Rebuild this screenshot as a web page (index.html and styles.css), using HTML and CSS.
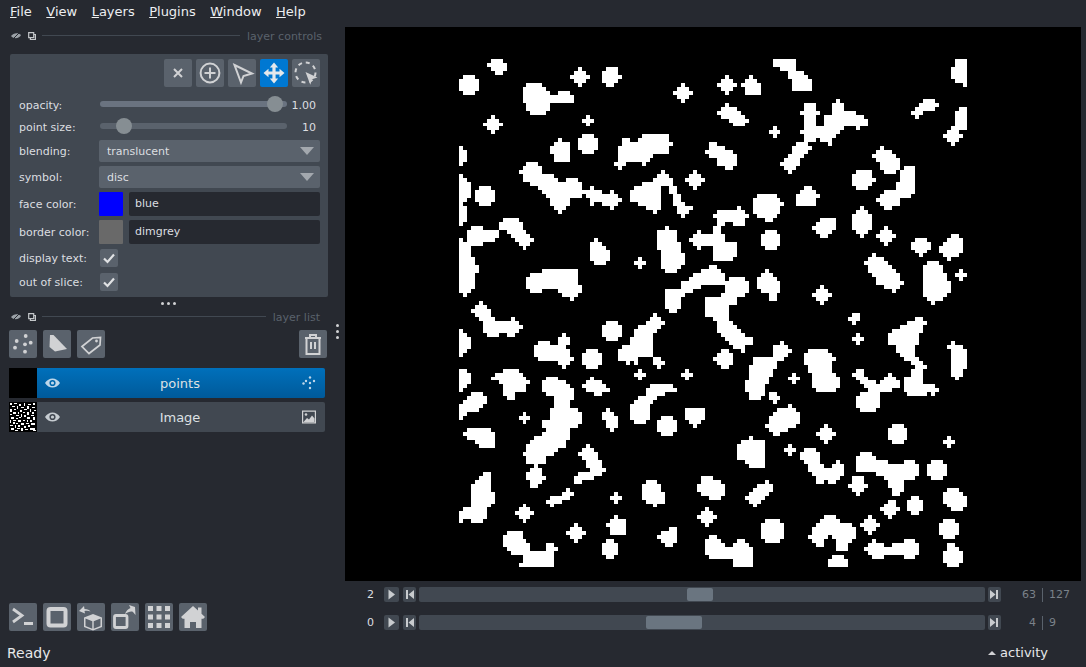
FILE: index.html
```html
<!DOCTYPE html>
<html lang="en">
<head>
<meta charset="utf-8">
<title>napari</title>
<link rel="stylesheet" href="styles.css">
</head>
<body>
<div class="app">
  <nav class="menu">
    <span><u>F</u>ile</span><span><u>V</u>iew</span><span><u>L</u>ayers</span><span><u>P</u>lugins</span><span><u>W</u>indow</span><span><u>H</u>elp</span>
  </nav>
  <div class="main">
    <aside class="left">
      <div class="dock-title first">
        <svg class="dock-ico" viewBox="0 0 10 8"><path d="M0 4c2-3 7-4 10-1-1 3-7 5-10 1z"/><path class="cut" d="M2 7L8 1"/></svg>
        <svg class="dock-ico small" viewBox="0 0 8 8"><path class="frame" d="M.7.7h5v5h-5zM6 2.5h1.4v5h-5V6"/></svg>
        <i class="rule"></i><span>layer controls</span>
      </div>
      <section class="controls">
        <div class="modes">
          <button class="btn"><svg viewBox="0 0 28 28"><path class="st" d="M10 10l8 8M18 10l-8 8"/></svg></button>
          <button class="btn"><svg viewBox="0 0 28 28"><circle class="st" cx="14" cy="14" r="9.400"/><path class="st" d="M14 8.500v11M8.500 14h11"/></svg></button>
          <button class="btn"><svg viewBox="0 0 28 28"><path class="st" d="M6.500 6L24 14.500 15.500 17 13 23.500z"/></svg></button>
          <button class="btn on"><svg viewBox="0 0 28 28"><path class="fl" d="M14 3.500l4.200 5h-2.600v3.900h3.900V9.800l5 4.200-5 4.200v-2.600h-3.900v3.900h2.600l-4.200 5-4.200-5h2.600v-3.900H8.500v2.600l-5-4.200 5-4.200v2.600h3.900V8.500H9.800z"/></svg></button>
          <button class="btn"><svg viewBox="0 0 28 28"><circle class="st dash" cx="13.500" cy="13.500" r="10"/><path class="fl" d="M13.500 13l12 5.500-5.500 1.700-1.700 5.500z"/></svg></button>
        </div>
        <div class="row r-slider"><label>opacity:</label><div class="track"><b class="fill-a"></b></div><em>1.00</em></div>
        <div class="row r-slider two"><label>point size:</label><div class="track"><b class="fill-b"></b></div><em>10</em></div>
        <div class="row r-combo first-combo"><label>blending:</label><div class="combo"><span>translucent</span><i></i></div></div>
        <div class="row r-combo"><label>symbol:</label><div class="combo"><span>disc</span><i></i></div></div>
        <div class="row r-color"><label>face color:</label><div class="swatch blue"></div><div class="field">blue</div></div>
        <div class="row r-color"><label>border color:</label><div class="swatch grey"></div><div class="field">dimgrey</div></div>
        <div class="row r-check"><label>display text:</label><div class="check"><svg viewBox="0 0 18 18"><path d="M4 9.500l3.500 3.500L14 5.500"/></svg></div></div>
        <div class="row r-check"><label>out of slice:</label><div class="check"><svg viewBox="0 0 18 18"><path d="M4 9.500l3.500 3.500L14 5.500"/></svg></div></div>
      </section>
      <div class="grip"><i></i><i></i><i></i></div>
      <div class="dock-title second">
        <svg class="dock-ico" viewBox="0 0 10 8"><path d="M0 4c2-3 7-4 10-1-1 3-7 5-10 1z"/><path class="cut" d="M2 7L8 1"/></svg>
        <svg class="dock-ico small" viewBox="0 0 8 8"><path class="frame" d="M.7.7h5v5h-5zM6 2.500h1.400v5h-5V6"/></svg>
        <i class="rule"></i><span>layer list</span>
      </div>
      <div class="vgrip"><i></i><i></i><i></i></div>
      <div class="layer-tools">
        <button class="btn"><svg viewBox="0 0 28 28"><g class="fl"><circle cx="16.700" cy="6" r="1.900"/><circle cx="7.700" cy="11" r="1.900"/><circle cx="21.700" cy="12.700" r="1.900"/><circle cx="16" cy="14.300" r="1.900"/><circle cx="6" cy="17.700" r="1.900"/><circle cx="16" cy="21.700" r="1.900"/></g></svg></button>
        <button class="btn"><svg viewBox="0 0 28 28"><path class="fl" d="M7 5h3.500L24 19l-12 2.500L6.500 17z"/></svg></button>
        <button class="btn"><svg viewBox="0 0 28 28"><path class="st thin" d="M5 16.500L15.500 8l8-.5-.5 7.500L12 23.500z"/><circle class="fl" cx="19.500" cy="11" r="1.400"/></svg></button>
        <button class="btn trash"><svg viewBox="0 0 28 28"><path class="st" d="M6 8h16M11 7.500V5h6v2.500M7.500 8.500V24h13V8.500M12 12v7M16 12v7"/></svg></button>
      </div>
      <ul class="layers">
        <li class="layer sel">
          <div class="thumb"></div>
          <div class="body">
            <svg class="eye" viewBox="0 0 16 12"><path d="M0 6c4-6.500 12-6.500 16 0-4 6.500-12 6.500-16 0z"/><circle cx="8" cy="6" r="3.300"/><circle class="pupil" cx="8" cy="6" r="1.700"/></svg>
            <span>points</span>
            <svg class="type" viewBox="0 0 14 14"><g><circle cx="1.500" cy="7.500" r="1.200"/><circle cx="4" cy="5" r="1.200"/><circle cx="8" cy="1.500" r="1.200"/><circle cx="12" cy="5" r="1.200"/><circle cx="8" cy="7" r="1.200"/><circle cx="8" cy="12" r="1.200"/></g></svg>
          </div>
        </li>
        <li class="layer">
          <div class="thumb noise"><svg viewBox="0 0 28 30"><path d="M1 1h2v2H1zM5 1h3v1H5zM10 2h2v2h-2zM15 1h1v3h-1zM19 2h3v1h-3zM24 1h2v2h-2zM3 4h3v1H3zM8 4h1v3H8zM12 5h3v1h-3zM18 4h2v3h-2zM23 5h3v1h-3zM1 7h2v3H1zM5 7h2v1H5zM11 8h2v2h-2zM15 7h3v1h-3zM21 7h1v3h-1zM25 8h2v1h-2zM4 10h3v2H4zM9 10h1v2H9zM14 10h2v1h-2zM18 10h2v3h-2zM23 10h2v2h-2zM1 12h2v1H1zM7 13h3v1H7zM12 12h1v3h-1zM15 13h2v2h-2zM22 13h3v1h-3zM2 15h3v2H2zM7 16h2v1H7zM10 15h2v1h-2zM18 15h3v2h-3zM24 15h2v3h-2zM1 18h1v3H1zM4 18h3v1H4zM9 18h3v2H9zM14 18h2v1h-2zM18 18h1v2h-1zM21 18h2v2h-2zM4 20h2v2H4zM7 21h2v1H7zM12 21h3v2h-3zM17 21h3v1h-3zM22 21h4v2h-4zM1 23h3v1H1zM6 23h1v3H6zM9 23h2v2H9zM15 24h2v2h-2zM19 23h2v2h-2zM2 26h3v2H2zM8 26h3v1H8zM12 26h2v3h-2zM16 27h3v1h-3zM21 26h5v2h-5zM6 28h3v1H6zM24 28h3v1h-3z"/></svg></div>
          <div class="body">
            <svg class="eye" viewBox="0 0 16 12"><path d="M0 6c4-6.500 12-6.500 16 0-4 6.500-12 6.500-16 0z"/><circle cx="8" cy="6" r="3.300"/><circle class="pupil" cx="8" cy="6" r="1.700"/></svg>
            <span>Image</span>
            <svg class="type img" viewBox="0 0 14 14"><path class="framed" d="M.6 1.100h12.800v11.800H.6z"/><circle cx="4" cy="4.500" r="1.300"/><path d="M1.500 12l3.500-4 2 1.500 3-4 2.500 3V12z"/></svg>
          </div>
        </li>
      </ul>
      <div class="view-tools">
        <button class="btn"><svg viewBox="0 0 28 28"><path class="st wide" d="M4 6l9 6.500L4 19M15 20.500h9"/></svg></button>
        <button class="btn"><svg viewBox="0 0 28 28"><rect class="st heavy" x="5.500" y="6" width="17" height="16.500" rx="2"/></svg></button>
        <button class="btn"><svg viewBox="0 0 28 28"><path class="fl" d="M16 11l9 3.500v9.500l-9 3.500-9-3.500v-9.500zM8.500 15.500v7.500l6.800 2.800v-7.500zM16.700 18.300v7.500l6.800-2.800v-7.500l-6.800 2.800z"/><path class="fl" d="M2 8l5-5 .5 3c3 0 5 1 6 2.500-2-1-4-1-6-.5l.5 2.500z"/></svg></button>
        <button class="btn"><svg viewBox="0 0 28 28"><rect class="st wide" x="3.500" y="12.500" width="12.500" height="12" rx="1.500"/><path class="fl" d="M14 11c1-3 3-5 5.500-6L18 2l6 2 .5 8-2.500-3c-2-1-5 0-8 2z"/></svg></button>
        <button class="btn"><svg viewBox="0 0 28 28"><path class="fl" d="M3 3h5v5H3zM11.500 3h5v5h-5zM20 3h5v5h-5zM3 11.500h5v5H3zM11.500 11.500h5v5h-5zM20 11.500h5v5h-5zM3 20h5v5H3zM11.500 20h5v5h-5zM20 20h5v5h-5z"/></svg></button>
        <button class="btn"><svg viewBox="0 0 28 28"><path class="fl" d="M14 3l5 4.500V4.500h3.500v6.300l3.500 3.200-1.700 1.800H22.500V25h-5.500v-6h-6v6H5.500v-9.200H3.700L2 14z"/></svg></button>
      </div>
    </aside>
    <div class="right">
      <div class="canvas">
        <svg class="blobs" viewBox="0 0 128 128">
          <defs>
            <path id="s5" d="M2 0h1v1h1v1h1v1h-1v1h-1v1h-1v-1h-1v-1h-1v-1h1v-1h1z"/>
            <path id="s3" d="M1 0h1v1h1v1h-1v1h-1v-1h-1v-1h1z"/>
          </defs>
          <use href="#s5" x="28" y="2"/><use href="#s5" x="54" y="6"/><use href="#s5" x="6" y="14"/><use href="#s5" x="57" y="28"/><use href="#s5" x="65" y="4"/><use href="#s5" x="105" y="42"/><use href="#s5" x="89" y="57"/><use href="#s5" x="14" y="112"/><use href="#s5" x="27" y="117"/><use href="#s5" x="60" y="113"/><use href="#s5" x="90" y="92"/><use href="#s5" x="101" y="115"/>
          <use href="#s3" x="31" y="14"/><use href="#s3" x="44" y="50"/><use href="#s3" x="78" y="17"/><use href="#s3" x="44" y="78"/><use href="#s3" x="56" y="78"/><use href="#s3" x="15" y="89"/><use href="#s3" x="38" y="109"/><use href="#s3" x="125" y="53"/><use href="#s3" x="99" y="69"/><use href="#s3" x="83" y="79"/><use href="#s3" x="122" y="95"/><use href="#s3" x="82" y="97"/>
          <path d="M8 0H11V1H12V3H11V4H9V3H8V2H7V1H8zM1 4H4V5H5V8H4V9H1V8H0V5H1zM31 19H34V20H35V23H34V24H31V23H30V20H31zM25 20H26V21H28V26H24V24H23V22H24V21H25zM17 6H21V7H22V8H23V9H25V8H28V9H29V11H23V13H22V14H18V13H17V11H16V7H17zM37 2H40V4H41V5H40V6H39V7H37V6H36V3H37zM46 19H53V21H54V22H53V24H49V25H48V26H47V27H46V26H42V27H41V28H40V27H39V26H40V22H41V20H43V21H45V20H46zM63 21H65V22H67V23H69V24H70V27H69V28H67V27H65V25H63V24H62V23H63zM17 26H20V27H21V29H24V30H25V31H27V30H30V31H31V35H28V37H27V38H26V39H25V38H24V37H23V35H22V34H21V33H20V32H18V31H16V29H15V28H16V27H17zM33 32H34V33H36V34H38V33H39V34H40V35H41V36H40V37H39V38H38V37H36V36H34V37H33V35H32V34H31V33H33zM5 32H8V33H9V36H8V37H5V36H4V33H5zM0 22H1V23H2V26H1V27H0zM0 29H1V30H2V31H3V35H2V36H1V37H2V41H1V42H0zM3 42H6V43H10V45H9V46H6V47H2V43H3zM11 40H15V41H16V43H17V44H18V45H19V46H18V47H17V48H16V47H15V46H14V45H13V44H12V43H10V41H11zM0 45H1V46H3V50H4V52H5V54H4V58H3V59H2V60H1V59H0zM34 45H35V46H36V47H37V48H38V51H37V52H34V51H33V46H34zM52 42H53V43H55V46H56V49H57V52H56V53H55V54H52V53H51V48H50V43H52zM21 53H30V57H31V59H30V60H29V61H28V60H26V59H25V58H21V59H18V58H17V55H18V54H21zM63 52H65V53H66V54H67V56H68V55H72V56H73V59H72V60H70V62H68V66H69V67H70V68H71V69H72V70H74V72H72V74H71V73H69V72H68V71H67V70H66V69H65V66H64V65H62V60H66V59H67V57H61V58H59V59H57V60H56V63H55V64H53V63H52V58H56V56H58V55H59V54H61V53H63zM73 4H74V5H75V6H76V9H72V7H71V6H72V5H73zM79 0H85V3H87V4H88V5H89V8H84V5H83V3H81V2H79zM125 0H128V7H127V6H125V5H124V2H125zM67 11H68V12H70V13H71V14H72V15H73V16H72V17H69V16H68V15H66V14H65V13H66V12H67zM95 10H96V11H97V13H100V14H102V15H103V17H101V18H100V17H97V18H96V19H95V20H94V22H93V21H91V20H90V21H88V22H89V23H88V24H87V25H86V27H85V28H84V29H83V28H82V27H81V26H82V25H83V24H84V22H85V21H87V19H86V18H87V14H86V13H87V11H90V13H91V14H90V17H92V14H94V11H95zM117 10H120V11H121V12H120V13H117V14H116V15H115V14H114V13H115V12H116V11H117zM126 12H128V18H126V19H127V20H126V21H125V22H124V21H123V20H122V19H123V18H124V17H125V13H126zM106 22H107V23H109V24H110V25H111V28H110V29H107V28H106V26H105V25H104V24H105V23H106zM112 27H115V34H114V35H111V37H109V38H107V37H106V36H105V35H106V34H107V33H110V31H111V28H112zM100 28H104V30H105V31H104V32H103V33H100V32H99V29H100zM75 34H80V35H81V36H82V37H81V39H80V40H79V41H77V40H75V39H74V35H75zM87 32H89V33H90V34H91V35H90V37H85V34H86V33H87zM70 37H71V38H72V39H73V40H72V42H69V41H67V42H66V44H67V46H70V50H69V51H64V47H61V48H60V47H59V46H58V45H59V44H60V43H61V44H64V42H65V40H64V39H65V38H70zM91 40H95V43H94V44H93V45H91V44H90V43H89V42H90V41H91zM101 37H102V38H103V39H104V43H103V44H102V45H101V44H100V43H99V39H100V38H101zM77 43H80V44H81V47H80V48H77V47H76V44H77zM115 45H118V46H119V48H118V49H117V50H116V49H115V48H114V46H115zM124 44H126V45H127V49H126V50H124V51H123V50H122V49H121V47H122V46H123V45H124zM104 49H105V50H107V51H108V52H109V53H110V54H111V56H112V57H111V58H110V59H109V58H107V57H105V55H104V54H103V52H102V51H103V50H104zM118 51H121V52H122V54H123V56H124V59H123V60H122V61H120V62H119V61H118V60H117V52H118zM77 53H78V54H79V55H80V56H81V59H80V61H78V59H76V58H75V55H76V54H77zM51 28H52V29H53V30H54V32H51V38H50V39H49V38H47V37H45V36H43V33H44V32H46V31H49V30H50V29H51zM53 32H55V34H56V36H57V37H59V38H58V39H57V40H56V39H55V37H54V34H53zM5 61H6V62H7V63H8V65H9V66H13V65H14V66H15V67H16V68H15V69H14V70H12V69H10V70H7V69H6V66H5V65H4V64H3V63H4V62H5zM0 68H1V69H2V70H3V73H2V74H1V75H0zM26 69H27V70H28V72H27V73H28V75H29V76H28V77H27V78H26V77H25V76H20V75H19V72H20V71H23V72H25V70H26zM32 73H35V74H36V77H35V78H32V77H31V74H32zM37 66H40V67H41V70H40V71H37V70H36V67H37zM49 64H50V65H51V66H52V67H51V68H50V69H49V75H45V77H44V76H43V77H42V76H40V73H41V72H43V70H44V68H45V67H47V66H48V65H49zM49 75H51V76H52V77H51V78H50V77H49zM0 78H2V79H3V82H2V83H1V84H0zM11 78H15V79H16V80H17V81H18V82H17V84H14V86H12V85H11V82H10V81H8V80H9V79H11zM22 80H25V81H27V82H28V83H29V86H28V88H30V89H31V92H30V93H28V96H27V98H25V99H24V100H22V102H20V103H21V105H22V106H21V107H20V108H18V106H17V104H18V103H19V102H17V100H16V99H17V97H18V96H19V95H21V94H22V93H21V91H23V88H24V85H22V84H21V81H22zM33 80H34V81H36V82H37V83H38V84H36V85H34V84H32V83H31V82H32V81H33zM48 82H54V83H55V84H52V85H50V86H49V87H48V91H47V92H44V91H43V87H44V86H45V85H47V83H48zM37 88H38V89H39V90H40V93H39V94H38V93H37V91H36V89H37zM51 90H54V91H55V94H54V95H51V94H50V91H51zM57 88H62V91H61V92H60V93H59V92H58V91H57zM3 84H6V85H7V87H6V88H5V89H2V90H1V91H0V87H1V86H2V85H3zM2 93H8V94H9V98H5V97H4V96H2V95H1V94H2zM32 97H33V98H34V99H35V101H36V103H37V104H36V105H34V106H31V107H29V105H30V104H33V103H32V101H31V100H30V99H31V98H32zM6 104H8V109H9V112H8V113H7V116H6V117H3V116H1V117H0V114H1V113H3V107H4V106H5V105H6zM27 108H28V109H29V110H28V111H26V112H24V113H23V112H22V111H23V110H26V109H27zM47 106H50V107H51V109H52V112H50V113H49V112H47V111H46V107H47zM39 115H40V116H42V120H38V118H37V117H38V116H39zM53 118H55V122H54V123H52V122H51V121H50V120H51V119H53zM37 121H39V122H40V125H39V126H37V125H36V122H37zM12 119H16V121H17V122H18V124H22V122H24V123H25V124H24V128H15V127H16V125H13V124H12V123H11V120H12zM61 105H64V106H66V107H67V110H66V111H63V110H61V109H60V107H61zM63 120H65V121H66V122H67V123H69V122H70V121H72V122H73V123H74V128H69V126H63V125H62V121H63zM66 73H68V74H69V77H68V78H66V77H65V76H64V75H65V74H66zM99 64H101V66H100V67H99V66H98V65H99zM115 65H117V66H118V67H117V69H116V72H115V75H116V76H117V77H118V78H117V82H120V83H121V84H120V85H119V84H118V85H113V84H112V80H114V78H115V77H114V76H112V75H111V74H110V72H108V69H109V68H111V67H113V66H115zM124 71H125V72H127V73H128V78H127V80H126V81H125V80H124V73H123V72H124zM81 71H82V72H83V73H84V74H83V75H82V76H80V78H79V80H78V82H77V85H76V86H73V84H72V81H73V77H74V75H79V72H81zM88 73H93V74H94V75H95V76H94V79H95V80H96V83H95V84H90V83H89V79H88V77H87V74H88zM78 84H80V85H81V86H80V87H79V86H78zM100 78H102V80H103V81H105V82H106V81H107V80H108V79H109V80H110V81H111V83H109V84H106V88H105V89H101V88H100V85H101V84H103V83H102V82H101V81H100V80H99V79H100zM83 87H84V88H85V89H86V92H85V93H83V94H81V95H79V94H78V93H77V92H78V90H79V89H80V88H83zM109 92H112V93H113V96H112V97H109V96H108V93H109zM73 95H74V96H77V103H73V102H72V101H70V97H71V96H73zM87 98H90V99H91V102H92V103H94V102H95V101H96V102H97V105H96V106H95V107H93V106H92V107H90V105H89V104H88V102H87V101H86V99H87zM101 99H104V100H105V101H108V102H112V101H115V102H116V105H115V106H112V109H111V110H109V108H108V106H107V105H105V104H100V100H101zM119 101H122V102H123V105H122V106H119V105H118V102H119zM99 105H102V107H103V108H102V109H101V110H100V109H99V108H98V107H99zM77 106H78V107H79V109H78V110H77V111H76V112H75V113H74V112H73V111H72V110H73V109H74V108H75V107H77zM123 108H126V109H127V110H128V113H127V114H124V113H123V112H122V109H123zM108 111H110V113H111V114H110V115H109V116H108V115H107V114H106V113H107V112H108zM114 110H116V111H117V114H116V115H114V114H113V111H114zM122 116H125V117H126V120H125V121H122V120H121V117H122zM77 116H81V117H82V121H81V122H77V121H76V117H77zM92 115H95V116H96V117H99V118H100V121H99V122H98V124H95V121H94V120H93V121H92V123H90V122H89V121H88V120H89V118H90V117H91V116H92zM104 121H105V122H107V123H109V122H112V121H115V122H116V125H115V126H112V125H107V126H104V125H103V124H102V123H103V122H104zM123 122H125V123H126V124H127V127H126V128H123V127H122V124H123zM94 125H97V126H98V128H93V126H94z"/>
        </svg>
      </div>
      <div class="dims">
        <div class="dim">
          <span class="idx">2</span>
          <button class="dbtn play"><svg viewBox="0 0 15 15"><path d="M4.500 2.500l6.500 5-6.500 5z"/></svg></button>
          <button class="dbtn"><svg viewBox="0 0 13 15"><path d="M3 3h2v9H3zM11 3v9L5.500 7.500z"/></svg></button>
          <div class="bar a"><b></b></div>
          <button class="dbtn"><svg viewBox="0 0 13 15"><path d="M8 3h2v9H8zM2 3v9l5.500-4.500z"/></svg></button>
          <span class="cur">63</span><i class="sep"></i><span class="max">127</span>
        </div>
        <div class="dim">
          <span class="idx">0</span>
          <button class="dbtn play"><svg viewBox="0 0 15 15"><path d="M4.500 2.500l6.500 5-6.500 5z"/></svg></button>
          <button class="dbtn"><svg viewBox="0 0 13 15"><path d="M3 3h2v9H3zM11 3v9L5.500 7.500z"/></svg></button>
          <div class="bar b"><b></b></div>
          <button class="dbtn"><svg viewBox="0 0 13 15"><path d="M8 3h2v9H8zM2 3v9l5.500-4.500z"/></svg></button>
          <span class="cur">4</span><i class="sep"></i><span class="max">9</span>
        </div>
      </div>
    </div>
  </div>
  <footer class="status">
    <span>Ready</span>
    <span class="activity"><i></i>activity</span>
  </footer>
</div>
</body>
</html>
```
FILE: styles.css
```css
* { box-sizing: border-box; }
html, body { margin: 0; padding: 0; background: #262930; }
body { font-family: "DejaVu Sans", sans-serif; color: #f0f1f2; }
.app { width: 1086px; height: 667px; display: flex; flex-direction: column; overflow: hidden; }
button { border: 0; padding: 0; margin: 0; background: none; display: block; }
svg { display: block; }

.menu { height: 27px; flex: none; display: flex; gap: 14.500px; padding: 3px 0 0 10px; font-size: 13px; line-height: 17px; color: #eceef0; }

.main { flex: 1; min-height: 0; display: flex; }
.left { width: 345px; flex: none; display: flex; flex-direction: column; position: relative; }
.right { flex: 1; display: flex; flex-direction: column; padding-right: 5px; }

.dock-title { display: flex; align-items: center; font-size: 11px; color: #5a626c; }
.dock-title span { padding-top: 2px; }
.dock-title.first { height: 17px; padding-left: 11px; padding-right: 23px; }
.dock-title.second { height: 17px; margin-top: -1px; padding-left: 11px; padding-right: 25px; }
.dock-title .rule { flex: 1; height: 1px; background: #414851; margin: 0 7px 0 6px; }
.dock-ico { width: 10px; height: 8px; fill: #9aa0a6; margin-right: 7px; }
.dock-ico .cut { stroke: #262930; stroke-width: 1; fill: none; }
.dock-ico.small { width: 8px; margin-right: 0; }
.dock-ico .frame { fill: none; stroke: #c4c7ca; stroke-width: 1.200; }

.controls { flex: none; width: 318px; height: 243px; margin: 10px 0 0 10px; background: #414851; border-radius: 2px; padding: 5px 8px 0 9px; }
.modes { display: flex; justify-content: flex-end; gap: 4px; height: 28px; margin-bottom: 7px; }
.btn { width: 28px; height: 28px; background: #5a626c; border-radius: 2px; flex: none; }
.btn svg { width: 28px; height: 28px; }
.btn.on { background: #0078d2; }
.st { fill: none; stroke: #d1d2d4; stroke-width: 2; }
.st.wide { stroke-width: 2.800; }
.st.heavy { stroke-width: 4; }
.st.thin { stroke-width: 1.700; }
.st.dash { stroke-dasharray: 4 3.850; }
.fl { fill: #d1d2d4; }
.btn.on .fl { fill: #e4e8ec; }

.row { display: flex; align-items: center; font-size: 11px; color: #dcdee0; }
.row label { width: 81px; flex: none; white-space: nowrap; }
.r-slider label, .r-slider em { padding-top: 2px; }
.r-slider { height: 20px; margin-bottom: 2px; }
.r-slider.two { margin-bottom: 4px; }
.track { width: 187px; height: 6px; background: #6a7380; border-radius: 3px; position: relative; }
.two .track { background: #5a626c; }
.track b { position: absolute; top: -5px; width: 16px; height: 16px; border-radius: 50%; background: #868e93; }
.fill-a { left: 167px; }
.fill-b { left: 16px; }
.r-slider em { font-style: normal; width: 29px; text-align: right; flex: none; }
.r-combo { height: 22px; margin-bottom: 4px; }
.r-combo label, .r-color label { width: 80px; }
.combo { flex: 1; height: 22px; background: #5a626c; border-radius: 2px; padding-left: 8px; display: flex; justify-content: space-between; align-items: center; }
.combo i { width: 0; height: 0; border-left: 7px solid transparent; border-right: 7px solid transparent; border-top: 8px solid #a3a8ae; margin-right: 6px; }
.r-color { height: 24px; margin-bottom: 4px; }
.swatch { width: 24px; height: 24px; flex: none; border-radius: 1px; }
.swatch.blue { background: #0000ff; }
.swatch.grey { background: #696969; }
.field { flex: 1; height: 24px; margin-left: 6px; background: #262930; border-radius: 2px; line-height: 24px; padding-left: 6px; }
.r-check { height: 18px; margin-bottom: 6px; }
.r-check label { width: 81px; }
.r-check:nth-last-child(2) { margin-top: 5px; }
.check { width: 18px; height: 18px; background: #5a626c; border-radius: 2px; }
.check svg { width: 18px; height: 18px; fill: none; stroke: #e0e2e4; stroke-width: 2.200; }

.grip { height: 12px; flex: none; display: flex; justify-content: center; align-items: center; gap: 3px; padding-right: 9px; }
.grip i { width: 3px; height: 3px; border-radius: 50%; background: #d1d2d4; }
.vgrip { position: absolute; left: 336px; top: 297px; display: flex; flex-direction: column; gap: 3px; }
.vgrip i { width: 3px; height: 3px; border-radius: 50%; background: #d1d2d4; display: block; }

.layer-tools { flex: none; display: flex; gap: 6px; padding: 5px 0 0 9px; width: 327px; margin-bottom: 10px; }
.trash { margin-left: auto; }

.layers { list-style: none; margin: 0; padding: 0 0 0 9px; width: 325px; display: flex; flex-direction: column; gap: 4px; flex: none; }
.layer { height: 30px; display: flex; }
.thumb { width: 28px; height: 30px; background: #000; flex: none; }
.thumb svg { width: 28px; height: 30px; fill: #fff; shape-rendering: crispEdges; }
.body { flex: 1; display: flex; align-items: center; padding: 0 9px 0 8px; background: #414851; border-radius: 0 2px 2px 0; font-size: 13px; color: #dde0e3; }
.sel .body { background: linear-gradient(#0070bb, #005a9a); }
.body span { flex: 1; text-align: center; padding-right: 2px; }
.eye { width: 15px; height: 12px; fill: #c6ccd1; flex: none; }
.eye circle { fill: #414851; }
.eye .pupil { fill: #c6ccd1; }
.sel .eye { fill: #bed7ea; }
.sel .eye circle { fill: #0068ae; }
.sel .eye .pupil { fill: #bed7ea; }
.type { width: 14px; height: 14px; flex: none; fill: #bed7ea; }
.type.img { fill: #d1d2d4; }
.framed { fill: none; stroke: #d1d2d4; stroke-width: 1.200; }

.view-tools { flex: none; display: flex; gap: 6px; padding-left: 9px; margin-top: auto; margin-bottom: 9px; }

.canvas { height: 554px; flex: none; background: #000; display: flex; padding: 32px 0 0 114px; }
.blobs { width: 508px; height: 508px; fill: #fff; shape-rendering: crispEdges; }

.dims { padding-top: 6px; display: flex; flex-direction: column; gap: 13px; }
.dim { height: 15px; display: flex; align-items: center; font-size: 11px; }
.idx { width: 39px; text-align: right; padding-right: 10px; flex: none; color: #dcdee0; }
.dbtn { width: 13px; height: 15px; background: #414851; border-radius: 2px; flex: none; }
.dbtn.play { width: 15px; margin-right: 4px; }
.dbtn svg { width: 100%; height: 15px; fill: #c8cbce; }
.bar { flex: 1; height: 15px; background: #414851; border-radius: 2px; margin: 0 3px; position: relative; }
.bar b { position: absolute; top: 1px; height: 13px; background: #6a7580; border-radius: 2px; }
.bar.a b { left: 268px; width: 26px; }
.bar.b b { left: 227px; width: 56px; }
.cur { width: 35px; text-align: right; flex: none; color: #7b828a; }
.sep { width: 1px; height: 14px; background: #5a626c; margin: 0 6px; flex: none; }
.max { width: 32px; flex: none; color: #7b828a; }

.status { height: 27px; flex: none; display: flex; justify-content: space-between; align-items: center; padding: 0 38px 2px 7px; font-size: 14px; color: #e6e8ea; }
.activity { font-size: 13px; display: flex; align-items: center; gap: 4px; }
.activity i { width: 0; height: 0; border-left: 4px solid transparent; border-right: 4px solid transparent; border-bottom: 4px solid #d1d2d4; }
```
